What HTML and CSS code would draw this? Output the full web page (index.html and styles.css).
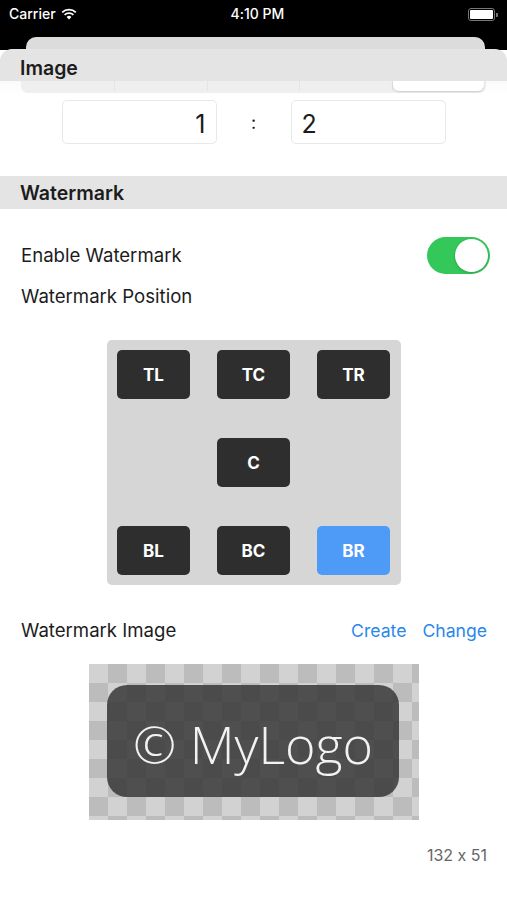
FILE: index.html
```html
<!DOCTYPE html>
<html lang="en">
<head>
    <meta charset="UTF-8">
    <meta name="viewport" content="width=device-width, initial-scale=1.0">
    <title>Watermark Settings</title>
    <link rel="stylesheet" href="styles.css">
</head>
<body>
    <div class="top">
        <div class="statusbar">
            <div class="carrier">
                Carrier
                <svg class="wifi" width="16" height="12" viewBox="0 0 16 12">
                    <path d="M8 11.5 L5.6 8.9 A3.5 3.5 0 0 1 10.4 8.9 Z" fill="#fff"/>
                    <path d="M3.6 6.9 A6.4 6.4 0 0 1 12.4 6.9" stroke="#fff" stroke-width="1.9" fill="none"/>
                    <path d="M1.2 4.4 A9.8 9.8 0 0 1 14.8 4.4" stroke="#fff" stroke-width="1.9" fill="none"/>
                </svg>
            </div>
            <div class="time">4:10 PM</div>
            <div class="battery">
                <span class="battery-body"><span class="battery-level"></span></span>
                <span class="battery-tip"></span>
            </div>
        </div>
        <div class="sheet-back"></div>
    </div>

    <div class="sheet-head">Image</div>
    <div class="peek">
        <div class="segments">
            <span></span><span></span><span></span><span></span><span class="seg-on"></span>
        </div>
    </div>

    <div class="ratio">
        <div class="ratio-box right">1</div>
        <div class="colon">:</div>
        <div class="ratio-box">2</div>
    </div>

    <div class="section">Watermark</div>

    <div class="row row-enable">
        <span>Enable Watermark</span>
        <span class="toggle"><span class="knob"></span></span>
    </div>
    <div class="row row-pos">
        <span>Watermark Position</span>
    </div>

    <div class="grid-wrap">
        <div class="pos-grid">
            <button class="pos">TL</button>
            <button class="pos">TC</button>
            <button class="pos">TR</button>
            <span></span>
            <button class="pos">C</button>
            <span></span>
            <button class="pos">BL</button>
            <button class="pos">BC</button>
            <button class="pos active">BR</button>
        </div>
    </div>

    <div class="row row-image">
        <span>Watermark Image</span>
        <span class="links"><a>Create</a><a>Change</a></span>
    </div>

    <div class="logo-wrap">
        <div class="checker">
            <div class="logo">© MyLogo</div>
        </div>
    </div>

    <div class="size">132 x 51</div>
</body>
</html>
```

FILE: styles.css
```css
body {
    margin: 0;
    background: #fff;
    font-family: Inter, "Noto Sans", sans-serif;
    font-feature-settings: "calt" 0;
    color: #1c1c1c;
}

.top {
    background: #000;
    height: 50px;
    overflow: hidden;
}

.statusbar {
    height: 37px;
    display: flex;
    align-items: flex-start;
    justify-content: space-between;
    color: #fff;
    font-size: 14px;
    font-weight: 500;
    padding: 5px 9px 0 9px;
    box-sizing: border-box;
}

.carrier {
    display: flex;
    align-items: center;
    gap: 5px;
    width: 120px;
}

.time {
    padding-left: 8px;
}

.battery {
    width: 120px;
    display: flex;
    justify-content: flex-end;
    align-items: center;
    padding-top: 3px;
}

.battery-body {
    width: 23px;
    height: 9px;
    border: 1.5px solid #777;
    border-radius: 3px;
    padding: 1px;
    display: flex;
}

.battery-level {
    flex: 1;
    background: #fff;
    border-radius: 1px;
}

.battery-tip {
    width: 2px;
    height: 4px;
    background: #777;
    border-radius: 0 1px 1px 0;
    margin-left: 1px;
}

.sheet-back {
    margin: 0 22px 0 26px;
    height: 16px;
    background: #dcdcdc;
    border-radius: 10px 10px 0 0;
}

.sheet-head {
    background: #e4e4e4;
    border-radius: 12px 12px 0 0;
    height: 32px;
    line-height: 39px;
    padding-left: 20px;
    font-size: 19.5px;
    font-weight: 600;
    margin-top: -1px;
}

.peek {
    height: 13px;
    overflow: hidden;
    background: linear-gradient(#fafafa, #fff);
}

.segments {
    margin: -19px 21px 0 21px;
    height: 31px;
    background: #efefef;
    border-radius: 7px;
    display: flex;
    padding: 2px;
    box-sizing: border-box;
}

.segments span {
    flex: 1;
    border-right: 1px solid #e4e4e4;
}

.segments .seg-on {
    border: none;
    background: #fff;
    border-radius: 6px;
    box-shadow: 0 1px 2px rgba(0, 0, 0, 0.15);
}

.ratio {
    display: grid;
    grid-template-columns: 155px 74px 155px;
    justify-content: center;
    margin-top: 6px;
}

.ratio-box {
    height: 44px;
    border: 1px solid #e8e8e8;
    border-radius: 5px;
    box-sizing: border-box;
    font-size: 25px;
    line-height: 46px;
    padding: 0 10px;
}

.ratio-box.right {
    text-align: right;
}

.colon {
    text-align: center;
    font-size: 18px;
    line-height: 46px;
}

.section {
    margin-top: 30px;
    height: 33px;
    background: #e4e4e4;
    line-height: 34px;
    padding-left: 20px;
    font-size: 19.5px;
    font-weight: 600;
}

.row {
    display: flex;
    justify-content: space-between;
    align-items: center;
    padding: 0 17px 0 21px;
    font-size: 18.6px;
}

.row-enable {
    margin-top: 27px;
    height: 38px;
}

.row-pos {
    margin-top: 10px;
    height: 24px;
}

.toggle {
    width: 63px;
    height: 37px;
    background: #34c759;
    border-radius: 19px;
    display: flex;
    justify-content: flex-end;
    align-items: center;
    padding: 2px;
    box-sizing: border-box;
}

.knob {
    width: 33px;
    height: 33px;
    background: #fff;
    border-radius: 50%;
    box-shadow: 0 1px 3px rgba(0, 0, 0, 0.2);
}

.grid-wrap {
    display: flex;
    justify-content: center;
    margin-top: 32px;
    padding-left: 1px;
}

.pos-grid {
    width: 294px;
    height: 245px;
    background: #d6d6d6;
    border-radius: 5px;
    padding: 10px;
    box-sizing: border-box;
    display: grid;
    grid-template-columns: repeat(3, 73px);
    grid-template-rows: repeat(3, 49px);
    column-gap: 27px;
    row-gap: 39px;
}

.pos {
    border: none;
    border-radius: 5px;
    background: #2e2e2e;
    color: #fff;
    font-family: Inter, sans-serif;
    font-size: 17px;
    font-weight: 700;
    padding: 0;
}

.pos.active {
    background: #4d9bf7;
}

.row-image {
    margin-top: 33px;
    height: 24px;
}

.links {
    display: flex;
    gap: 16px;
    padding-right: 3px;
    font-size: 17.6px;
}

.links a {
    color: #2a87ea;
}

.logo-wrap {
    display: flex;
    justify-content: center;
    margin-top: 22px;
    padding-left: 1px;
}

.checker {
    width: 330px;
    height: 156px;
    background: repeating-conic-gradient(#bcbcbc 0 25%, #d2d2d2 0 50%) 0 0 / 38px 38px;
    padding: 21px 20px 23px 18px;
    box-sizing: border-box;
}

.logo {
    height: 112px;
    border-radius: 20px;
    background: rgba(50, 50, 50, 0.82);
    color: #f2f2f2;
    font-family: "Open Sans", sans-serif;
    font-weight: 300;
    font-size: 52px;
    line-height: 118px;
    text-align: center;
}

.size {
    text-align: right;
    padding-right: 20px;
    margin-top: 25px;
    font-size: 16px;
    color: #666;
}
```
